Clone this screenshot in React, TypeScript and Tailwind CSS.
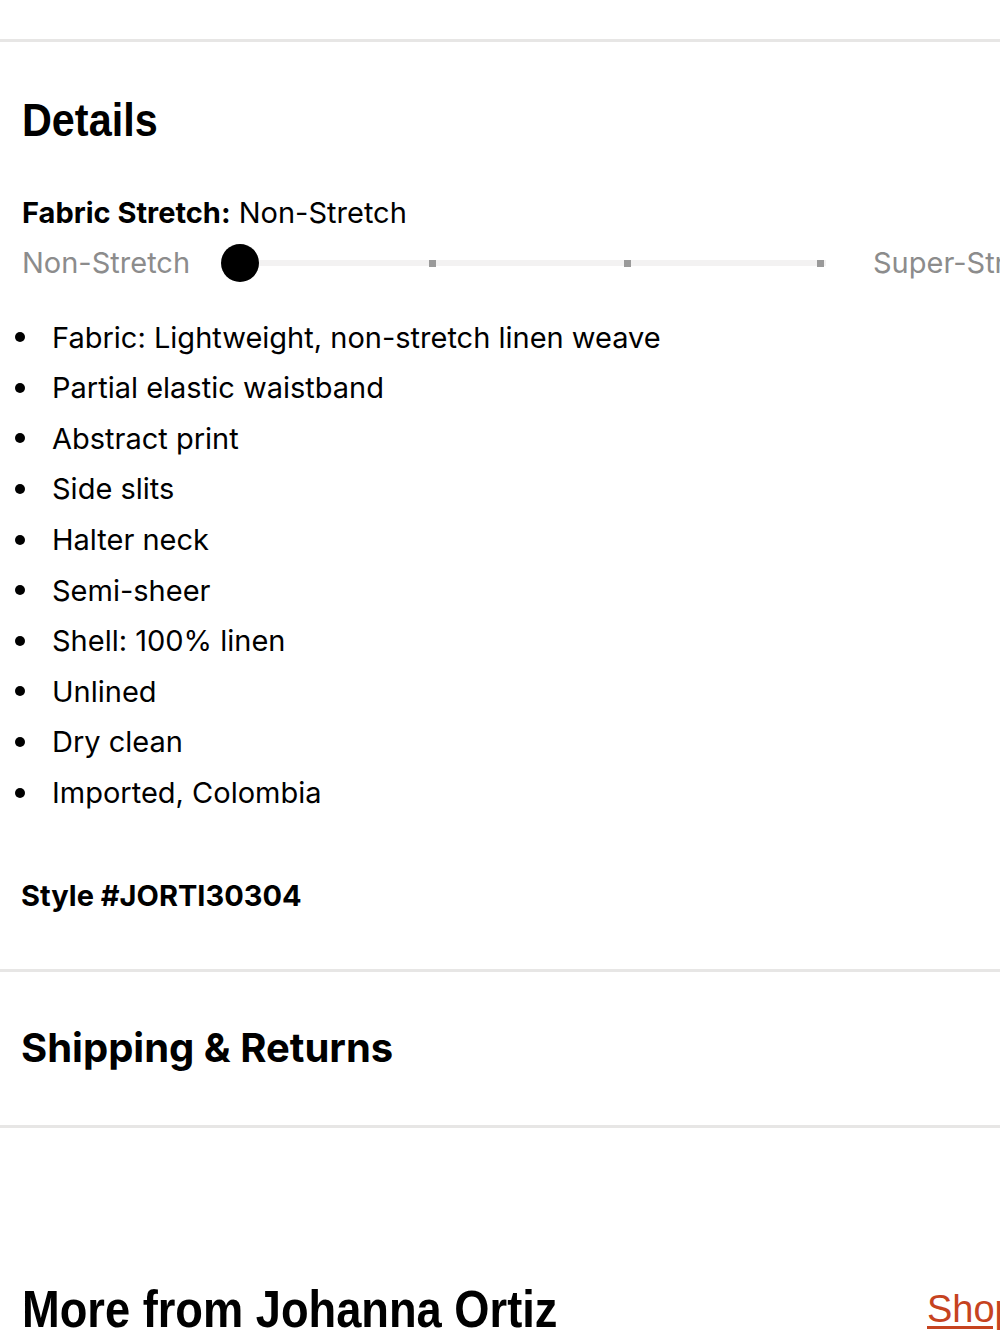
const features = [
  "Fabric: Lightweight, non-stretch linen weave",
  "Partial elastic waistband",
  "Abstract print",
  "Side slits",
  "Halter neck",
  "Semi-sheer",
  "Shell: 100% linen",
  "Unlined",
  "Dry clean",
  "Imported, Colombia",
];

const body = { fontFamily: '"Inter", "Liberation Sans", sans-serif' };
const heading = { fontFamily: '"Liberation Sans", Arial, sans-serif' };

function StretchScale() {
  return (
    <div className="mt-[4px] flex items-center h-[52px]">
      <span className="w-[178px] text-[29px] text-[#8c8c8c]" style={body}>
        Non-Stretch
      </span>
      {/* track with the current-value knob on the left */}
      <div className="relative w-[626px] h-[38px] flex items-center">
        <div className="absolute left-[36px] right-0 h-[6px] bg-[#f3f2f2]" />
        <div className="absolute left-[21px] top-0 w-[38px] h-[38px] rounded-full bg-black" />
        <div className="absolute left-[229px] w-[7px] h-[7px] bg-[#9a9a9a]" />
        <div className="absolute left-[424px] w-[7px] h-[7px] bg-[#9a9a9a]" />
        <div className="absolute left-[617px] w-[7px] h-[7px] bg-[#9a9a9a]" />
      </div>
      <span className="ml-[47px] whitespace-nowrap text-[29px] text-[#8c8c8c]" style={body}>
        Super-Stretch
      </span>
    </div>
  );
}

export default function App() {
  return (
    <div className="w-[1000px] overflow-hidden bg-white text-black">
      <div className="w-[1200px]">
        <div className="h-[39px]" />
        <div className="border-t-[3px] border-[#e7e6e5]" />

        {/* Details */}
        <section className="pl-[22px]">
          <div className="pt-[54px] h-[140px]">
            <h2
              className="inline-block origin-left scale-x-[0.88] text-[47px] leading-[48px] font-bold"
              style={heading}
            >
              Details
            </h2>
          </div>
          <p className="mt-[11px] text-[29px] leading-[40px]" style={body}>
            <span className="font-bold">Fabric Stretch:</span> Non-Stretch
          </p>
          <StretchScale />
        </section>

        <ul className="mt-[23px] pl-[15px]" style={body}>
          {features.map((f) => (
            <li key={f} className="flex items-center h-[50.6px] text-[29px]">
              <span className="w-[10px] h-[10px] rounded-full bg-black mr-[27px]" />
              {f}
            </li>
          ))}
        </ul>

        <p className="pl-[21px] mt-[56px] h-[95px] text-[29px] font-bold" style={body}>
          Style #JORTI30304
        </p>
        <div className="border-t-[3px] border-[#e7e6e5]" />

        <h2 className="pl-[21px] h-[153px] flex items-center text-[40px] font-bold" style={body}>
          Shipping &amp; Returns
        </h2>
        <div className="border-t-[3px] border-[#e7e6e5]" />

        <div className="h-[153px]" />
        <div className="flex items-end pl-[22px]">
          <div className="w-[905px]">
            <h2
              className="inline-block origin-left scale-x-[0.87] text-[52px] leading-[56px] font-bold"
              style={heading}
            >
              More from Johanna Ortiz
            </h2>
          </div>
          <a className="text-[38px] leading-[56px] text-[#c6431f] underline underline-offset-4" style={heading}>
            Shop All
          </a>
        </div>
      </div>
    </div>
  );
}
